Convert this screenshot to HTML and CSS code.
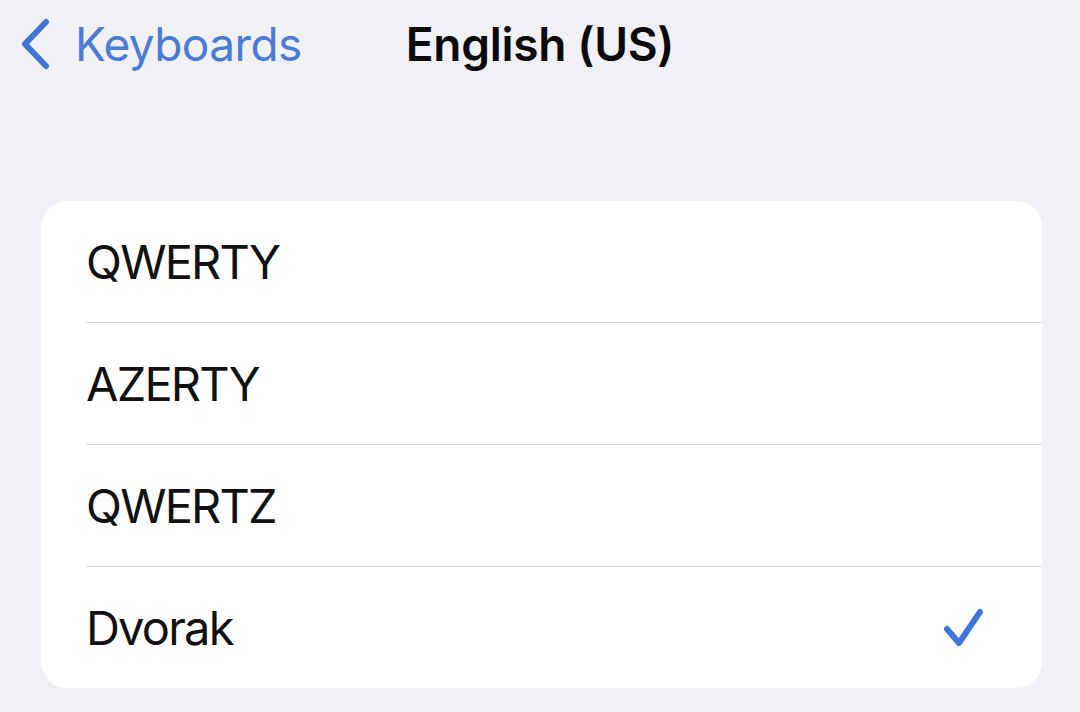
FILE: index.html
```html
<!DOCTYPE html>
<html>
<head>
<meta charset="utf-8">
<link rel="stylesheet" href="styles.css">
</head>
<body>
<div class="screen">
  <header class="nav">
    <div class="nav-left">
      <a class="back">
        <svg class="chev" width="34" height="54" viewBox="0 0 34 54">
          <path d="M28 5 L7 27 L28 49" fill="none" stroke="#3f76d8" stroke-width="6" stroke-linecap="round" stroke-linejoin="round"/>
        </svg>
        <span class="back-label">Keyboards</span>
      </a>
    </div>
    <h1 class="title">English (US)</h1>
    <div class="nav-right"></div>
  </header>
  <ul class="list">
    <li class="row"><span class="label">QWERTY</span></li>
    <li class="row"><span class="label">AZERTY</span></li>
    <li class="row"><span class="label">QWERTZ</span></li>
    <li class="row"><span class="label">Dvorak</span>
      <svg class="check" width="46" height="44" viewBox="0 0 46 44">
        <path d="M7 23 L19 37 L40 6" fill="none" stroke="#3f76d8" stroke-width="6" stroke-linecap="round" stroke-linejoin="round"/>
      </svg>
    </li>
  </ul>
</div>
</body>
</html>
```
FILE: styles.css
```css
html, body {
  margin: 0;
  padding: 0;
}
body {
  background: #f0f0f5;
  font-family: Inter, "Noto Sans", sans-serif;
  color: #0a0a0a;
}
.screen {
  width: 1080px;
  height: 712px;
  overflow: hidden;
}
.nav {
  display: grid;
  grid-template-columns: 1fr auto 1fr;
  align-items: center;
  height: 88px;
}
.nav-left {
  display: flex;
  align-items: center;
  padding-left: 18px;
}
.back {
  display: flex;
  align-items: center;
  gap: 23px;
  color: #4a7bd6;
  text-decoration: none;
}
.chev {
  display: block;
}
.back-label {
  font-size: 46px;
  font-weight: 400;
  letter-spacing: -0.6px;
}
.title {
  margin: 0;
  font-size: 46px;
  font-weight: 600;
  letter-spacing: -0.3px;
  color: #0a0a0a;
}
.list {
  list-style: none;
  margin: 113px 38px 0 41px;
  padding: 0;
  background: #ffffff;
  border-radius: 26px;
  overflow: hidden;
}
.row {
  display: flex;
  align-items: center;
  justify-content: space-between;
  height: 121px;
  margin-left: 45px;
  padding-right: 56px;
  border-bottom: 1px solid #d6d6da;
}
.row:last-child {
  border-bottom: none;
}
.label {
  font-size: 47px;
  font-weight: 400;
  letter-spacing: -1.8px;
  color: #111111;
}
.check {
  display: block;
}
```
